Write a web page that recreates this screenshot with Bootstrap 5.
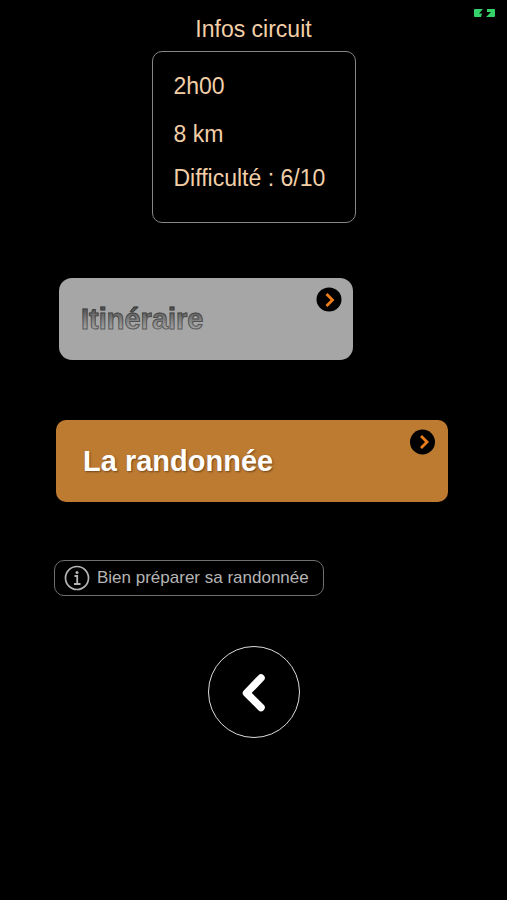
<!DOCTYPE html>
<html lang="fr">
<head>
<meta charset="utf-8">
<meta name="viewport" content="width=device-width, initial-scale=1">
<title>Infos circuit</title>
<link href="https://cdn.jsdelivr.net/npm/bootstrap@5.3.0/dist/css/bootstrap.min.css" rel="stylesheet">
<style>
  body { background: #000; color: #f3cfa8; font-family: "Liberation Sans", Arial, sans-serif; font-size: 23px; line-height: 28px; }
  .page-head { padding-top: 15px; }
  .page-title { font-size: 23px; line-height: 28px; }
  .battery { top: 8px; right: 11px; line-height: 0; }
  .facts { width: 40%; min-width: 204px; margin-top: 8px; padding: 20px 0 30px 21px; border: 1px solid #868686; border-radius: 10px; }
  .facts .distance { padding: 20px 0 16px; }
  .choices { padding: 55px 59px 0 56px; gap: 60px; }
  .tile { height: 82px; padding: 0 27px; border-radius: 10px; font-size: 29px; line-height: 36px; }
  .tile-route { width: 75%; margin-left: 3px; padding-left: 22px; background: #a6a6a6; border-radius: 13px; }
  .tile-route .tile-label { color: transparent; background: linear-gradient(#4c4c4c 15%, #a0a0a0 75%); -webkit-background-clip: text; background-clip: text; -webkit-text-stroke: 1px rgba(50, 50, 50, .65); }
  .tile-hike { background: #bd7b32; color: #fff; text-shadow: 1px 1px 2px rgba(70, 40, 10, .65); }
  .tile-hike:hover { color: #fff; }
  .tile-arrow { top: 9px; right: 11px; }
  .tile-hike .tile-arrow { right: 12px; }
  .prepare { margin: 58px 0 0 54px; padding: 4px 14px 4px 9px; gap: 7px; border: 1px solid #6f6f6f; border-radius: 10px; background: transparent; color: #b5b5b5; font-size: 17px; line-height: 26px; }
  .back { width: 92px; height: 92px; margin-top: 50px; border: 1px solid #ddd; background: transparent; }
</style>
</head>
<body>
<header class="page-head position-relative text-center">
  <h1 class="page-title fw-normal m-0">Infos circuit</h1>
  <span class="battery position-absolute" role="img" aria-label="Batterie en charge">
    <svg width="23" height="10" viewBox="0 0 23 10" fill="#35d26a" aria-hidden="true"><path d="M2 1h8L6 5.500h3L8 9H2Q1 9 1 8V2Q1 1 2 1zM14 1h7q1 0 1 1v6q0 1-1 1h-8l5-5h-4z"/></svg>
  </span>
</header>
<main class="d-flex flex-column">
  <ul class="facts list-unstyled mx-auto mb-0">
    <li>2h00</li>
    <li class="distance">8 km</li>
    <li>Difficulté : 6/10</li>
  </ul>
  <nav class="choices d-flex flex-column" aria-label="Circuit">
    <a class="tile tile-route position-relative d-flex align-items-center fw-bold text-decoration-none" href="#itineraire">
      <span class="tile-label">Itinéraire</span>
      <svg class="tile-arrow position-absolute" width="26" height="25" viewBox="0 0 26 25" fill="none" aria-hidden="true"><ellipse cx="13" cy="12.500" rx="12.500" ry="12" fill="#000"/><path d="M10.500 7l6 6-6 6" stroke="#ee7d1b" stroke-width="2.800"/></svg>
    </a>
    <a class="tile tile-hike position-relative d-flex align-items-center fw-bold text-decoration-none" href="#randonnee">
      <span class="tile-label">La randonnée</span>
      <svg class="tile-arrow position-absolute" width="26" height="26" viewBox="0 0 26 26" fill="none" aria-hidden="true"><circle cx="12.500" cy="13" r="12.500" fill="#000"/><path d="M11 7l6 6-6 6" stroke="#ee7d1b" stroke-width="2.800"/></svg>
    </a>
  </nav>
  <button class="prepare d-flex align-items-center align-self-start" type="button">
    <svg width="26" height="26" viewBox="0 0 26 26" fill="none" stroke="#b5b5b5" aria-hidden="true"><circle cx="13" cy="13" r="11.500" stroke-width="1.700"/><path d="M10.500 11h2.700v8M10 19h6.500" stroke-width="1.800"/><circle cx="13" cy="7.500" r="1.500" fill="#b5b5b5" stroke="none"/></svg>
    <span>Bien préparer sa randonnée</span>
  </button>
  <button class="back rounded-circle d-flex align-items-center justify-content-center p-0 mx-auto" type="button" aria-label="Retour">
    <svg width="30" height="40" viewBox="0 0 30 40" fill="none" stroke="#fff" stroke-width="7.500" stroke-linecap="round" stroke-linejoin="round" aria-hidden="true"><path d="M22 6L7.500 21 22 35.500"/></svg>
  </button>
</main>
<script src="https://cdn.jsdelivr.net/npm/bootstrap@5.3.0/dist/js/bootstrap.bundle.min.js"></script>
</body>
</html>
